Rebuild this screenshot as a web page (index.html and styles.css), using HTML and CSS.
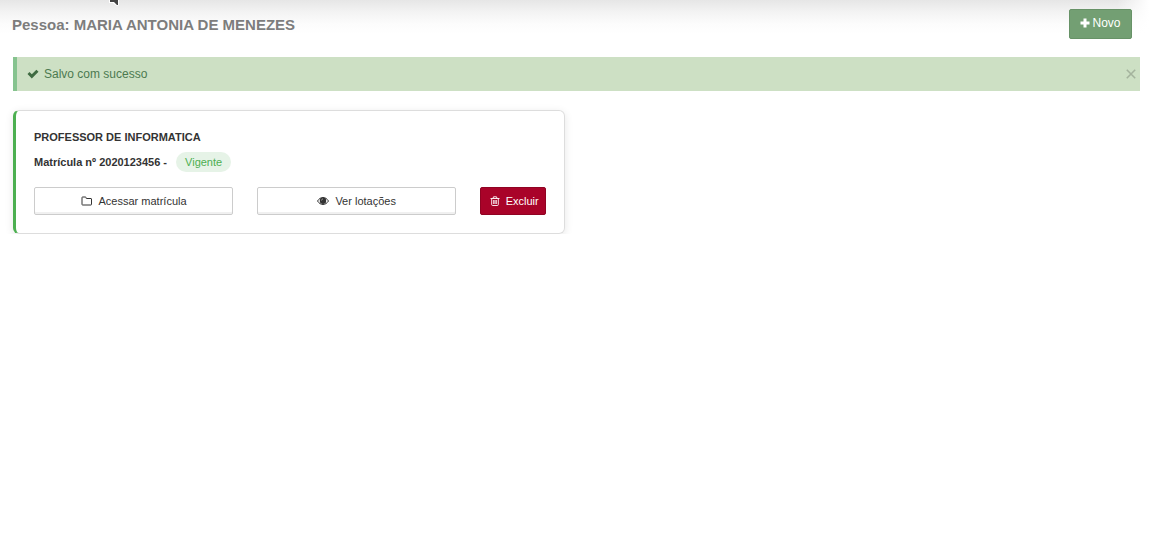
FILE: index.html
```html
<!DOCTYPE html>
<html lang="pt-br">
    <head>
        <meta charset="utf-8">
        <title>Pessoa</title>
        <link rel="stylesheet" href="styles.css">
    </head>
    <body>
        <svg class="seta" viewBox="0 0 12 7" aria-hidden="true">
            <path d="M0 0H10V5L8 6L5 4L4 3H0z" fill="#fff"/>
            <path d="M1 0H9V5H8L5 2H1z" fill="#444"/>
        </svg>
        <header class="topo">
            <h1>Pessoa: MARIA ANTONIA DE MENEZES</h1>
            <button type="button" class="btn btn-novo">
                <svg class="icone-mais" viewBox="0 0 10 10" aria-hidden="true"><path d="M3.5 0.5h3v3h3v3h-3v3h-3v-3h-3v-3h3z" fill="currentColor"/></svg>
                Novo
            </button>
        </header>
        <main>
            <div class="alerta" role="status">
                <svg class="icone-ok" viewBox="0 0 12 10" aria-hidden="true"><path d="M0.5 5L2.5 3L4.8 5.2L9.4 0.7L11.5 2.7L4.8 9.4z" fill="currentColor"/></svg>
                <span>Salvo com sucesso</span>
                <button type="button" class="fechar" aria-label="Fechar">
                    <svg viewBox="0 0 9 9" aria-hidden="true"><path d="M0.7 0.7L8.3 8.3M8.3 0.7L0.7 8.3" fill="none" stroke="currentColor" stroke-width="1.4"/></svg>
                </button>
            </div>
            <section class="cartao">
                <h2>PROFESSOR DE INFORMATICA</h2>
                <div class="matricula">
                    <strong>Matrícula nº 2020123456 -</strong>
                    <span class="situacao">Vigente</span>
                </div>
                <div class="acoes">
                    <button type="button" class="btn btn-acao">
                        <svg class="icone-pasta" viewBox="0 0 12 10" aria-hidden="true"><path d="M1.5 1C1.2 1 1 1.2 1 1.5V8.5C1 8.8 1.2 9 1.5 9H10C10.3 9 10.5 8.8 10.5 8.5V3C10.5 2.7 10.3 2.5 10 2.5H5.5C5.2 2.5 5 2.3 5 2V1.5C5 1.2 4.8 1 4.5 1z" fill="none" stroke="currentColor"/></svg>
                        Acessar matrícula
                    </button>
                    <button type="button" class="btn btn-acao">
                        <svg class="icone-olho" viewBox="0 0 12 10" aria-hidden="true">
                            <path d="M0.5 5C2 2.7 3.9 1.5 6 1.5S10 2.7 11.5 5C10 7.3 8.1 8.5 6 8.5S2 7.3 0.5 5z" fill="none" stroke="currentColor"/>
                            <circle cx="6" cy="4.8" r="3.2" fill="currentColor"/>
                            <path d="M4.5 4.5C4.5 3.6 5.1 3 6 3" fill="none" stroke="#fff" stroke-width="0.5"/>
                        </svg>
                        Ver lotações
                    </button>
                    <button type="button" class="btn btn-excluir">
                        <svg class="icone-lixo" viewBox="0 0 10 10" aria-hidden="true"><path d="M0.5 2.5H9.5M3 2.5L3.5 0.8H6.5L7 2.5M1.7 2.5V8.6Q1.7 9.5 2.6 9.5H7.4Q8.3 9.5 8.3 8.6V2.5M3.7 4V8M5 4V8M6.3 4V8" fill="none" stroke="currentColor" stroke-width="0.9"/></svg>
                        Excluir
                    </button>
                </div>
            </section>
        </main>
    </body>
</html>
```
FILE: styles.css
```css
* {
    box-sizing: border-box;
}
body {
    margin: 0;
    font-family: "Liberation Sans", Arial, sans-serif;
    font-size: 12px;
    color: #333;
    background: #fff;
}
.seta {
    position: absolute;
    top: 0;
    left: 109px;
    width: 12px;
    height: 7px;
}
.topo {
    display: flex;
    justify-content: space-between;
    align-items: flex-start;
    padding: 9px 21px 0 12px;
    height: 57px;
    /*sombra da barra de cima, termina antes do canto direito*/
    background: linear-gradient(to right, transparent calc(100% - 36px), #fff calc(100% - 4px)),
                linear-gradient(#e6e6e6, #f3f3f3 12px, #fcfcfc 24px, #fff 34px);
}
.topo h1 {
    margin: 7px 0 0;
    font-size: 15px;
    line-height: 18px;
    color: #7d7d7d;
}
.btn {
    display: flex;
    align-items: center;
    justify-content: center;
    margin: 0;
    border: 1px solid #ccc;
    border-radius: 2px;
    font-family: inherit;
    cursor: pointer;
}
.btn-novo {
    gap: 2px;
    width: 63px;
    height: 30px;
    padding: 0 0 2px;
    font-size: 12px;
    color: #fff;
    background: #739f73;
    border-color: #679267;
}
.icone-mais {
    width: 10px;
    height: 10px;
}
main {
    padding: 0 13px;
}
.alerta {
    display: flex;
    align-items: center;
    gap: 5px;
    height: 34px;
    padding: 0 4px 0 10px;
    border-left: 4px solid #86c38f;
    background: #cde0c4;
    color: #4c7a50;
}
.icone-ok {
    width: 12px;
    height: 10px;
    color: #3f6b42;
}
.fechar {
    display: flex;
    margin-left: auto;
    padding: 0;
    border: 0;
    background: none;
    color: #a4b39d;
    cursor: pointer;
}
.fechar svg {
    width: 10px;
    height: 10px;
}
.cartao {
    width: 49%;
    margin-top: 19px;
    padding: 19px 18px 18px;
    border: 1px solid #ddd;
    border-left: 3px solid #4caf50;
    border-radius: 6px;
    box-shadow: 0 2px 8px rgba(0,0,0,0.1);
    font-size: 11px;
}
.cartao h2 {
    margin: 0 0 8px;
    font-size: 11px;
    line-height: 14px;
}
.matricula {
    display: flex;
    align-items: center;
    gap: 9px;
}
.situacao {
    padding: 0 9px;
    border-radius: 10px;
    line-height: 20px;
    color: #4caf50;
    background: #e6f3e7;
}
.acoes {
    display: flex;
    gap: 24px;
    margin-top: 15px;
}
.acoes .btn {
    height: 28px;
    gap: 6px;
    padding: 0;
    font-size: 11px;
}
.btn-acao {
    flex: 1;
    color: #333;
    background: #fff;
    box-shadow: inset 0 -2px 0 #f0f0f0;
}
.acoes .btn-excluir {
    width: 66px;
    padding-left: 2px;
    color: #fff;
    background: #a90329;
    border-color: #900323;
}
.icone-pasta,
.icone-olho {
    width: 12px;
    height: 10px;
}
.icone-lixo {
    width: 10px;
    height: 10px;
}
```
